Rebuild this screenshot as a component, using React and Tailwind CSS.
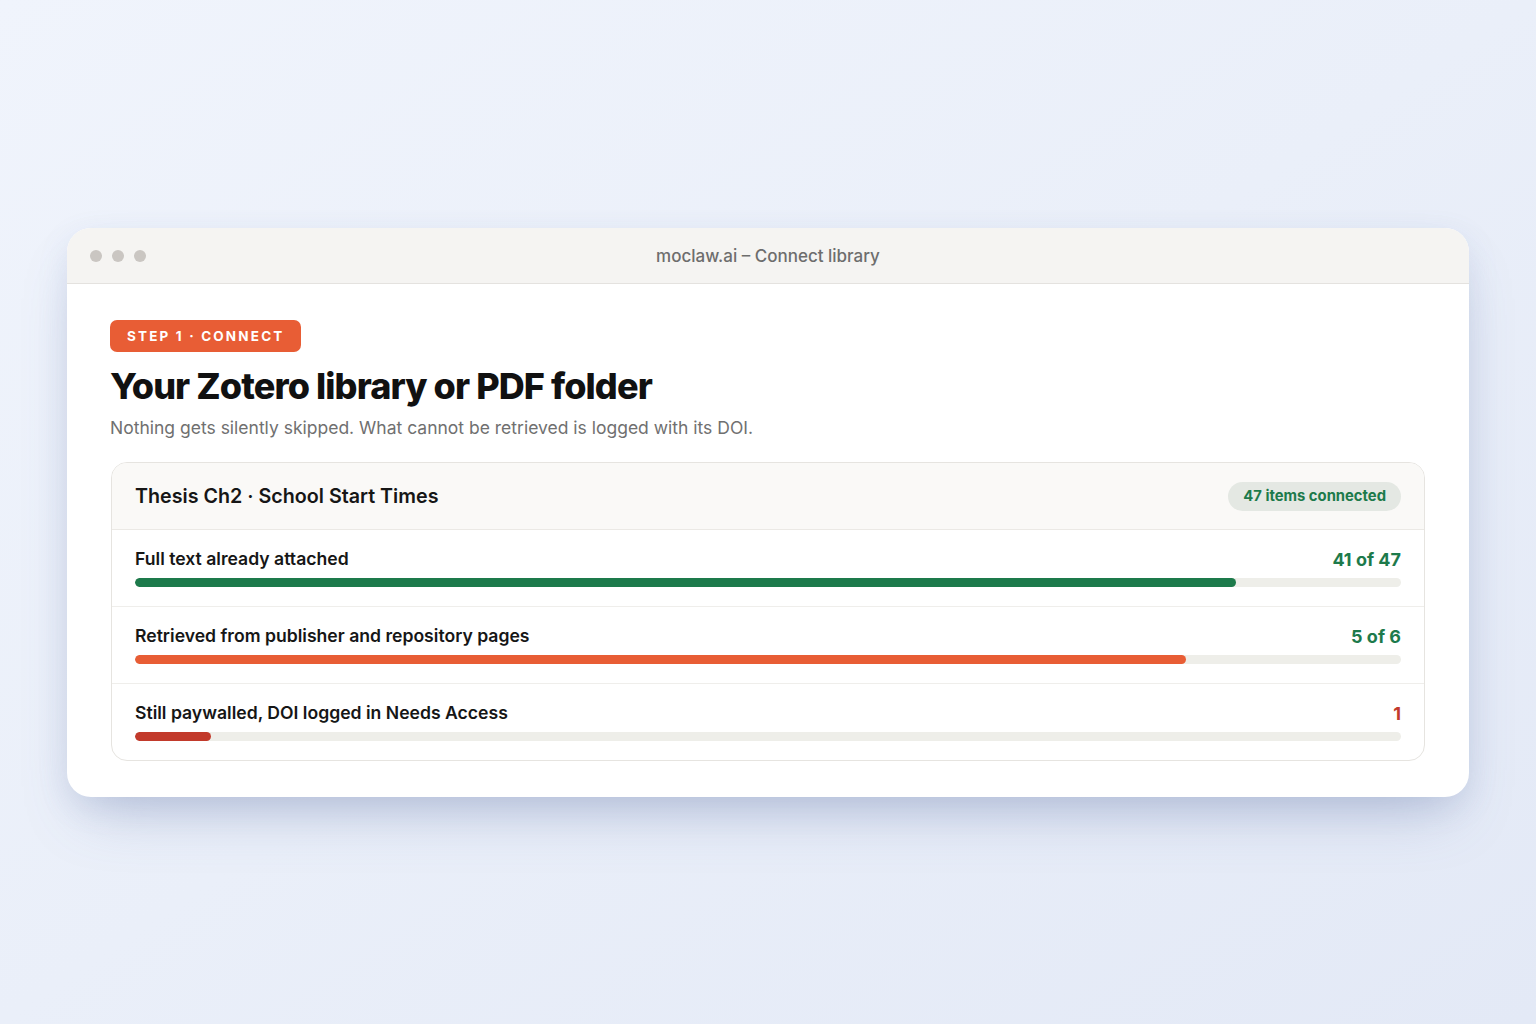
import React from 'react';

const ROWS = [
  { label: 'Full text already attached', value: '41 of 47', pct: 87, bar: 'bg-[#1d7a4b]', text: 'text-[#1d7a4b]' },
  { label: 'Retrieved from publisher and repository pages', value: '5 of 6', pct: 83, bar: 'bg-[#e85d35]', text: 'text-[#1d7a4b]' },
  { label: 'Still paywalled, DOI logged in Needs Access', value: '1', pct: 6, bar: 'bg-[#c23a2b]', text: 'text-[#c23a2b]' },
];

function ProgressRow({ row, last }) {
  return (
    <div className={`px-[23px] pt-[19px] pb-[19px] ${last ? '' : 'border-b border-[#efeeeb]'}`}>
      <div className="flex items-center justify-between h-[22px]">
        <span className="text-[17.6px] font-semibold text-[#161616]">{row.label}</span>
        <span className={`text-[18px] font-bold ${row.text}`}>{row.value}</span>
      </div>
      <div className="mt-[7px] h-[9px] w-full rounded-full bg-[#eeeee9] overflow-hidden">
        <div className={`h-full rounded-full ${row.bar}`} style={{ width: `${row.pct}%` }} />
      </div>
    </div>
  );
}

export default function App() {
  return (
    <div
      className="min-h-screen h-screen w-full flex items-center justify-center bg-gradient-to-br from-[#f0f4fc] via-[#eaeff9] to-[#e3e9f6]"
      style={{ fontFamily: 'Inter, "Noto Sans", sans-serif' }}
    >
      <div className="w-[1402px] rounded-[24px] bg-white overflow-hidden shadow-[0_30px_60px_-20px_rgba(90,110,160,0.35),0_10px_30px_rgba(120,140,190,0.15)]">
        {/* title bar */}
        <div className="relative h-[56px] bg-[#f5f4f2] border-b border-[#e4e2df] flex items-center justify-center pt-[3px]">
          <div className="absolute left-[23px] top-[22px] flex gap-[10px]">
            <span className="w-[12px] h-[12px] rounded-full bg-[#cac6c2]" />
            <span className="w-[12px] h-[12px] rounded-full bg-[#cac6c2]" />
            <span className="w-[12px] h-[12px] rounded-full bg-[#cac6c2]" />
          </div>
          <span className="text-[17px] font-medium text-[#6d6d6d]">moclaw.ai – Connect library</span>
        </div>

        {/* body */}
        <div className="px-[43px] pt-[36px] pb-[36px]">
          <div className="inline-flex items-center h-[32px] px-[17px] pt-[2px] rounded-[7px] bg-[#e85d35] text-white text-[13.5px] font-bold tracking-[0.16em]">
            STEP 1 · CONNECT
          </div>
          <h1 className="mt-[12px] text-[36px] leading-[44px] font-extrabold tracking-[-0.025em] text-[#111111]">
            Your Zotero library or PDF folder
          </h1>
          <p className="mt-[8px] text-[17.5px] leading-[24px] text-[#707070]">
            Nothing gets silently skipped. What cannot be retrieved is logged with its DOI.
          </p>

          <div className="mt-[22px] mx-[1px] rounded-[16px] border border-[#e6e4e0] overflow-hidden">
            <div className="h-[67px] px-[23px] pt-[2px] flex items-center justify-between bg-[#faf9f7] border-b border-[#ebe9e5]">
              <span className="text-[19.7px] font-semibold text-[#161616]">Thesis Ch2 · School Start Times</span>
              <span className="h-[29px] px-[15px] flex items-center rounded-full bg-[#e4e8e3] text-[14.8px] font-bold text-[#1d7a4b]">
                47 items connected
              </span>
            </div>
            {ROWS.map((row, i) => (
              <ProgressRow key={row.label} row={row} last={i === ROWS.length - 1} />
            ))}
          </div>
        </div>
      </div>
    </div>
  );
}
